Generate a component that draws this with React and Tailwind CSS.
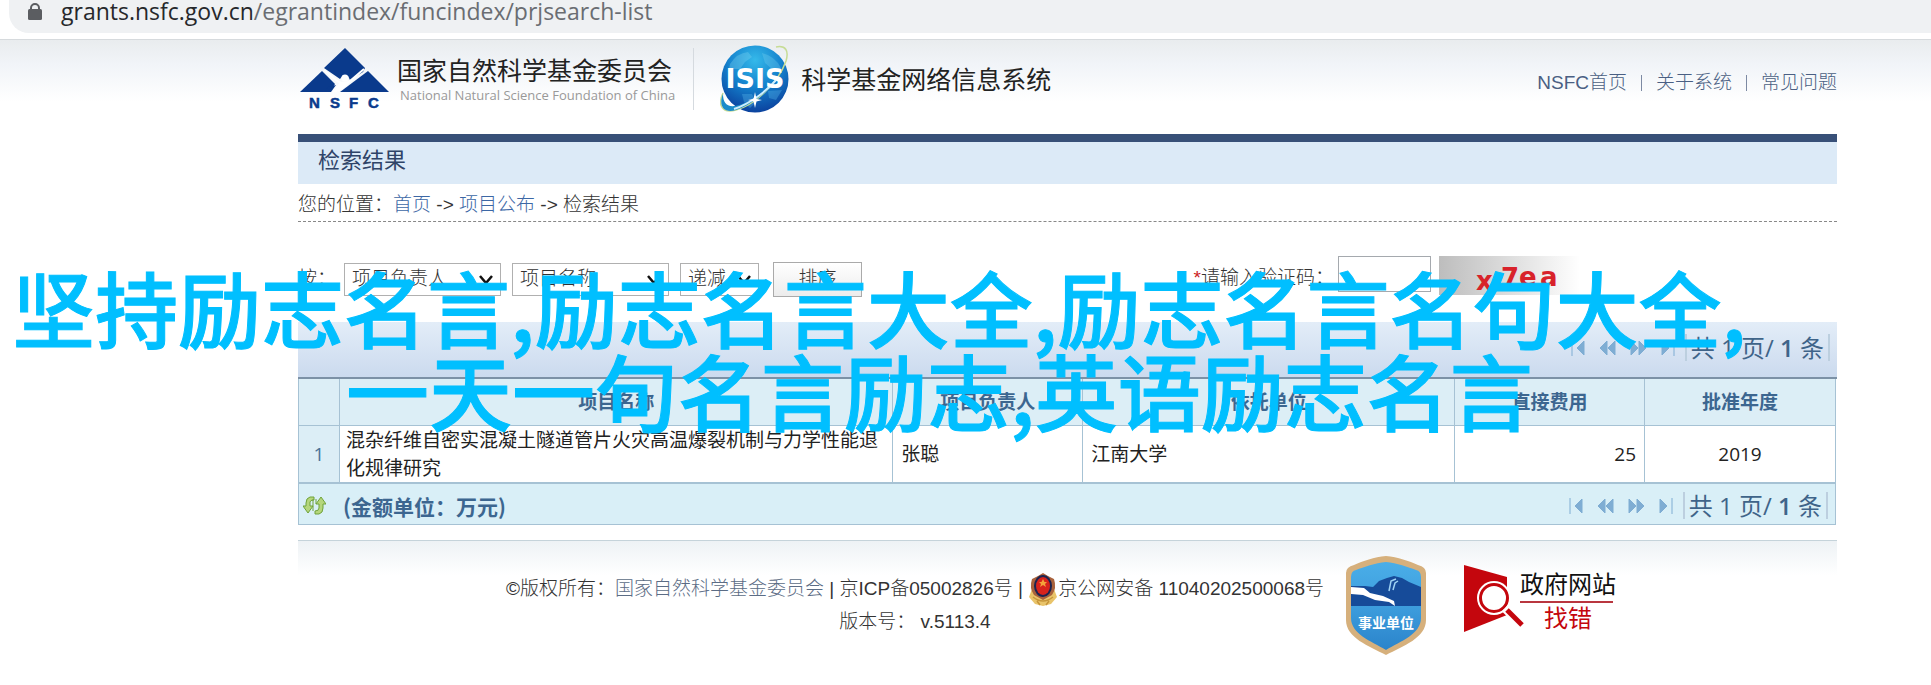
const sans = "font-['Liberation_Sans','Noto_Sans_CJK_SC',sans-serif]";
const ui = "font-['Open_Sans','Noto_Sans_CJK_SC',sans-serif]";
const cjk = "font-['Noto_Sans_CJK_SC',sans-serif]";

const navLinks = ['NSFC首页', '关于系统', '常见问题'];

const sortFields = [
  { id: 'sort-1', label: '第一排序字段', value: '项目负责人', width: 'w-[157px]' },
  { id: 'sort-2', label: '第二排序字段', value: '项目名称', width: 'w-[157px]' },
  { id: 'sort-order', label: '排序方式', value: '递减', width: 'w-[79px]' },
];

const columns = ['', '项目名称', '项目负责人', '依托单位', '直接费用', '批准年度'];

const projects = [
  {
    id: 1,
    name: '混杂纤维自密实混凝土隧道管片火灾高温爆裂机制与力学性能退化规律研究',
    leader: '张聪',
    unit: '江南大学',
    cost: 25,
    year: 2019,
  },
];

function NsfcLogo() {
  return (
    <svg width="90" height="62" viewBox="0 0 90 62" aria-label="NSFC">
      <path d="M45 0 L65 20 L63 24 L50 32 L48 28 L43 27 L40 31 L24 20 Z" fill="#0a3a8c" />
      <path d="M22 23 L31 32 L35 36 L30 44 L0 44 Z" fill="#0a3a8c" />
      <path d="M68 23 L89 44 L40 44 Z" fill="#0a3a8c" />
      <path d="M36 37 L31 44 L25 44 L28 39 Z" fill="#0a3a8c" />
      <path d="M24 22 L37 33 L41 35 L35 44 M64 21 L50 33 L38 43" fill="none" stroke="#fff" strokeWidth="2" />
      <circle cx="45" cy="30" r="3.5" fill="#fff" />
      <path d="M40 34 L50 33 L46 38 L36 44 L33 44 Z" fill="#fff" />
      <g fill="#0a3a8c" stroke="#0a3a8c" strokeWidth="0.5" fontFamily="Liberation Sans, sans-serif" fontWeight="bold" fontSize="15">
        <text x="9" y="60">N</text>
        <text x="30" y="60">S</text>
        <text x="49" y="60">F</text>
        <text x="68" y="60">C</text>
      </g>
    </svg>
  );
}

function IsisLogo() {
  return (
    <svg width="70" height="70" viewBox="0 0 70 70" aria-label="ISIS">
      <defs>
        <radialGradient id="globe" cx="50%" cy="22%" r="80%">
          <stop offset="0%" stopColor="#35b9ea" />
          <stop offset="50%" stopColor="#1482cd" />
          <stop offset="100%" stopColor="#0b3f9c" />
        </radialGradient>
      </defs>
      <circle cx="35" cy="35" r="33.5" fill="url(#globe)" />
      <path d="M10 20 Q17 9 28 8 L32 13 L25 18 L20 25 L9 25 Z" fill="#7fd3f2" opacity="0.35" />
      <path d="M42 9 Q55 12 61 24 L52 25 L45 19 Z" fill="#7fd3f2" opacity="0.3" />
      <path d="M22 50 L32 50 L36 58 L30 64 L24 58 Z M48 47 L62 46 L56 56 L49 54 Z" fill="#58b6ea" opacity="0.35" />
      <path d="M3 49 C-3 62 3 70 16 66 C34 61 58 40 66 17 C69 7 66 1 56 3" fill="none" stroke="#c6dc95" strokeWidth="1.5" />
      <path d="M3 50 C-2 62 4 70 16 66 C30 62 48 47 57 36 C44 49 27 60 15 62 C6 63 3 58 3 50 Z" fill="#1b8cc9" />
      <path d="M14 65 C30 60 48 46 57 35" fill="none" stroke="#cdeeff" strokeWidth="2" />
      <text x="35" y="44" textAnchor="middle" fill="#fff" fontFamily="DejaVu Sans, sans-serif" fontWeight="bold" fontSize="27">ISIS</text>
      <path d="M35 48 L36.5 55 L42 56 L36.5 57.5 L35 64 L33.5 57.5 L28 56 L33.5 55 Z" fill="#fff" />
    </svg>
  );
}

function ShieldBadge() {
  return (
    <svg width="82" height="100" viewBox="0 0 82 100" aria-label="事业单位">
      <defs>
        <linearGradient id="shield" x1="0" y1="0" x2="0" y2="1">
          <stop offset="0%" stopColor="#4aaee8" />
          <stop offset="50%" stopColor="#3d9ddd" />
          <stop offset="100%" stopColor="#2b84cb" />
        </linearGradient>
      </defs>
      <path d="M41 0 C53 1 64 5 73 9 Q81 11 81 17 V64 C81 82 58 90 41 99 C24 90 1 82 1 64 V17 Q1 11 9 9 C18 5 29 1 41 0 Z" fill="#d6b07c" />
      <path d="M41 6 C52 7 63 11 71 14 Q76 15 76 21 V62 C76 78 56 85 41 94 C26 85 6 78 6 62 V21 Q6 15 11 14 C19 11 30 7 41 6 Z" fill="url(#shield)" />
      <path d="M6 30 L20 30 L28 31 L34 25 L42 22 L49 20 L57 22 L64 26 L76 31 V50 H6 Z" fill="#164b99" />
      <path d="M6 31 L19 32 L25 37 L38 40 L49 45 L50 50 L44 46 L30 44 L18 39 L6 38 Z" fill="#fff" />
      <path d="M44 35 L46 25 L51 23 M48 34 L50 27 L53 25" stroke="#9fd2f4" strokeWidth="1.5" fill="none" />
      <text x="41" y="72" textAnchor="middle" fill="#fff" fontFamily="Noto Sans CJK SC, sans-serif" fontWeight="bold" fontSize="14">事业单位</text>
    </svg>
  );
}

function ErrorFinder() {
  return (
    <svg width="154" height="70" viewBox="0 0 154 70" aria-label="政府网站找错">
      <path d="M0 0 L43 12 V50 L0 67 Z" fill="#c4060d" />
      <circle cx="30" cy="33" r="17" fill="#fff" />
      <circle cx="30" cy="33" r="13.5" fill="#fff" stroke="#c4060d" strokeWidth="3" />
      <path d="M41 43 L60 62" stroke="#fff" strokeWidth="9" />
      <path d="M43 45 L58 60" stroke="#c4060d" strokeWidth="5" />
      <text x="56" y="28" fill="#111" fontFamily="Noto Sans CJK SC, sans-serif" fontWeight="400" fontSize="24">政府网站</text>
      <path d="M56 37 H149" stroke="#b9363f" strokeWidth="2" />
      <text x="80" y="62" fill="#c4060d" fontFamily="Noto Sans CJK SC, sans-serif" fontWeight="400" fontSize="24">找错</text>
    </svg>
  );
}

function PoliceEmblem() {
  return (
    <svg className="inline-block align-middle" width="30" height="33" viewBox="0 0 30 33" aria-hidden="true">
      <path d="M4 16 L1 24 L7 31 L15 33 L23 31 L29 24 L26 16 Z" fill="#e9c46a" />
      <path d="M15 0 L20 3 L26 6 Q29 15 24 22 L15 27 L6 22 Q1 15 4 6 L10 3 Z" fill="#a9623c" />
      <ellipse cx="15" cy="13" rx="9" ry="11" fill="#1c2450" />
      <ellipse cx="15" cy="13" rx="7" ry="9" fill="#d8231c" />
      <path d="M15 6 L16.5 9 L19 9 L17 11 L18 14 L15 12 L12 14 L13 11 L11 9 L13.5 9 Z" fill="#f4a43a" />
      <path d="M5 24 Q15 32 25 24 M9 28 L12 32 M21 28 L18 32" stroke="#c6953a" strokeWidth="1.5" fill="none" />
    </svg>
  );
}

const pagerIcons = [
  { label: '首页', d: 'M1 0 V16 M13 1 V15 L6 8 Z', width: 14 },
  { label: '上一页', d: 'M8 1 V15 L1 8 Z M16 1 V15 L9 8 Z', width: 17 },
  { label: '下一页', d: 'M1 1 V15 L8 8 Z M9 1 V15 L16 8 Z', width: 17 },
  { label: '末页', d: 'M13 0 V16 M1 1 V15 L8 8 Z', width: 14 },
];

function Pager() {
  return (
    <div className="ml-auto flex items-center pr-[7px] text-[#3f6489]">
      <div className="flex items-center gap-[14px] pr-[10px]">
        {pagerIcons.map((icon) => (
          <button key={icon.label} type="button" aria-label={icon.label}>
            <svg width={icon.width} height="16" viewBox={`0 0 ${icon.width} 16`} fill="#7fadd3" stroke="#7fadd3" strokeWidth="1">
              <path d={icon.d} />
            </svg>
          </button>
        ))}
      </div>
      <div className={`border-x-2 border-[#bccfdf] px-1 text-[24px] leading-[27px] whitespace-nowrap ${ui}`}>
        共 1 页/ <b className="font-semibold">1</b> 条
      </div>
    </div>
  );
}

function SortSelect({ field }) {
  return (
    <div className={`relative ${field.width}`}>
      <select id={field.id} aria-label={field.label} className="h-[33px] w-full appearance-none border border-[#b0b0b0] bg-white pl-[7px] font-light text-[#333]">
        <option>{field.value}</option>
      </select>
      <svg className="pointer-events-none absolute top-3 right-2" width="14" height="10" viewBox="0 0 14 10">
        <path d="M1 1 L7 8 L13 1" fill="none" stroke="#111" strokeWidth="2.5" />
      </svg>
    </div>
  );
}

export default function App() {
  return (
    <div className={`relative min-h-screen overflow-hidden bg-white text-[19px] text-[#333] ${sans}`}>
      {/* Address bar */}
      <div className="h-[39px] pl-[9px]">
        <div className="flex h-[33px] items-start rounded-bl-[20px] bg-[#eff1f3] pl-[19px]">
          <svg className="mt-[3px]" width="14" height="17" viewBox="0 0 14 17">
            <path d="M3 8 V5 A4 4 0 0 1 11 5 V8" fill="none" stroke="#5b5d61" strokeWidth="2" />
            <rect x="0" y="6" width="14" height="11" rx="1.5" fill="#5b5d61" />
          </svg>
          <span className={`ml-[19px] text-[23px] leading-[22px] text-[#6a6d72] ${ui}`}>
            <span className="text-[#26282b]">grants.nsfc.gov.cn</span>/egrantindex/funcindex/prjsearch-list
          </span>
        </div>
      </div>

      <div className="border-t border-[#d6dadd] bg-[linear-gradient(#e9ecee,#f1f4f8_24px,#ffffff_62px)] bg-no-repeat pr-[94px] pl-[298px]">
        <header className="mb-4 flex h-[78px] items-center pl-0.5">
          <NsfcLogo />
          <div className="ml-[7px]">
            <h1 className={`text-[25px] leading-8 text-[#222] ${cjk}`}>国家自然科学基金委员会</h1>
            <p className={`pl-[3px] text-[13px] leading-5 text-[#999] ${ui}`}>National Natural Science Foundation of China</p>
          </div>
          <div className="ml-[18px] h-[62px] w-px bg-[#d5dadf]" />
          <div className="ml-[26px]"><IsisLogo /></div>
          <h2 className={`ml-[11px] pb-0.5 text-[25px] leading-8 text-[#222] ${cjk}`}>科学基金网络信息系统</h2>
          <nav className="ml-auto flex items-center pt-2 font-light text-[#4a5f83]">
            {navLinks.map((label, i) => (
              <span key={label} className="flex items-center">
                {i > 0 && <span className="mx-[14px] h-4 w-px bg-[#7d8aa3]" />}
                <a href="#">{label}</a>
              </span>
            ))}
          </nav>
        </header>

        <div className="border-t-8 border-[#385078] bg-[#dceaf7] pb-1 pl-5 text-[22px] leading-[38px] text-[#2f4468]">检索结果</div>

        <div className="border-b border-dashed border-[#888] pt-[5px] leading-8 font-light">
          您的位置：<a href="#" className="text-[#3c67a5]">首页</a> <span className="font-normal">-&gt;</span>{' '}
          <a href="#" className="text-[#3c67a5]">项目公布</a> <span className="font-normal">-&gt;</span> 检索结果
        </div>

        {/* Sort and verification code */}
        <form className="flex items-start pt-[34px] pb-[25px]" onSubmit={(e) => e.preventDefault()}>
          <div className="flex items-center pt-[6px]">
            <label htmlFor="sort-1" className="w-[46px] font-light">按：</label>
            <div className="flex items-center gap-[11px]">
              {sortFields.map((field) => <SortSelect key={field.id} field={field} />)}
            </div>
            <button type="submit" className="ml-[14px] h-[35px] w-[89px] border border-[#aaa] bg-gradient-to-b from-white to-[#ececec] font-light">
              排序
            </button>
          </div>
          <div className="mr-[257px] ml-auto flex items-start">
            <label htmlFor="captcha" className="pt-2 pr-1 font-light"><span className="text-[#c22]">*</span>请输入验证码：</label>
            <input id="captcha" type="text" className="h-9 w-[93px] border border-[#a5a9ae] bg-white" />
            <div className="ml-2 h-[39px] w-[141px] bg-gradient-to-r from-[#bdbdbd] to-white">
              <svg width="141" height="39" viewBox="0 0 141 39" fill="#d8222a" fontFamily="DejaVu Sans, sans-serif" fontWeight="bold" fontSize="26">
                <text x="37" y="34">x</text>
                <text x="62" y="31">7</text>
                <text x="80" y="30">e</text>
                <text x="101" y="30">a</text>
              </svg>
            </div>
          </div>
        </form>

        {/* Results */}
        <div className="flex h-[55px] items-center bg-gradient-to-b from-[#e3edf8] to-[#cbdaee] pb-1">
          <Pager />
        </div>
        <div className="border-t-2 border-[#7c91a6] pr-px">
          <table className={`w-full table-fixed border-collapse ${ui}`}>
            <colgroup>
              <col className="w-[41px]" />
              <col className="w-[36%]" />
              <col className="w-[190px]" />
              <col />
              <col className="w-[190px]" />
              <col className="w-[191px]" />
            </colgroup>
            <thead>
              <tr className="h-[46px] bg-[#dceef6] text-[#3c6690]">
                {columns.map((name) => (
                  <th key={name} className="border border-t-0 border-[#a6c2d4] p-0 font-bold">{name}</th>
                ))}
              </tr>
            </thead>
            <tbody>
              {projects.map((p) => (
                <tr key={p.id} className="leading-7 text-[#222]">
                  <td className="border border-[#a6c2d4] bg-[#dceef6] p-0 text-center text-[#4a7296]">{p.id}</td>
                  <td className="border border-[#a6c2d4] px-1.5 py-0">{p.name}</td>
                  <td className="border border-[#a6c2d4] px-2 py-0">{p.leader}</td>
                  <td className="border border-[#a6c2d4] px-2 py-0">{p.unit}</td>
                  <td className="border border-[#a6c2d4] px-2 py-0 text-right">{p.cost}</td>
                  <td className="border border-[#a6c2d4] px-2 py-0 text-center">{p.year}</td>
                </tr>
              ))}
            </tbody>
          </table>
          <div className="flex h-[42px] items-center border border-[#a6c2d4] bg-[#d9eff7] pt-1">
            <button type="button" aria-label="刷新" className="ml-1">
              <svg width="23" height="19" viewBox="0 0 23 19" fill="#b5d67c" stroke="#6fa23a" strokeWidth="1">
                <path d="M11 1 H7 Q3 2 3 7 V10 H0 L5 17 L10 10 H7 V6 Q7 4 11 4 Z" />
                <path d="M12 18 H16 Q20 17 20 12 V8 H23 L18 1 L13 8 H16 V12 Q16 15 12 15 Z" />
                <path d="M10 3 V15 M13 3 V8" fill="none" />
              </svg>
            </button>
            <span className={`ml-[17px] text-[21px] leading-7 font-bold text-[#3c6690] ${cjk}`}>(金额单位：万元)</span>
            <Pager />
          </div>
        </div>

        <footer className="mt-[15px] flex items-start border-t border-[#c5d3da] bg-[linear-gradient(#eef2f5,#ffffff_34px)]">
          <div className="ml-[208px] pt-8 text-center leading-8 font-light">
            <p>
              ©版权所有：<a href="#" className="text-[#5b6c85]">国家自然科学基金委员会</a> | 京ICP备05002826号 | <PoliceEmblem />
              京公网安备 11040202500068号
            </p>
            <p>版本号： v.5113.4</p>
          </div>
          <a href="#" className="mt-[15px] ml-[21px]"><ShieldBadge /></a>
          <a href="#" className="mt-6 ml-[37px]"><ErrorFinder /></a>
        </footer>
      </div>

      {/* Caption lying over the page */}
      <p className={`pointer-events-none absolute top-[265px] left-3 text-[83px] leading-[83px] font-medium whitespace-nowrap text-[#00bfff] [-webkit-text-stroke:1px_#00bfff] ${cjk}`}>
        坚持励志名言,励志名言大全,励志名言名句大全,
        <span className="block pl-[334px]">一天一句名言励志,英语励志名言</span>
      </p>
    </div>
  );
}
